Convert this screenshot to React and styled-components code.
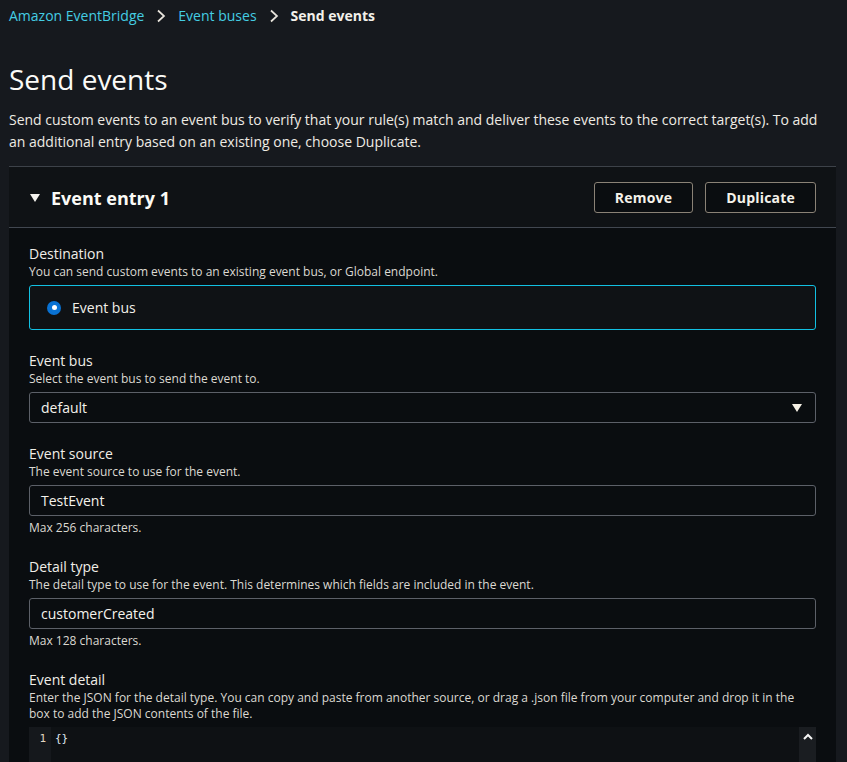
import React from "react";
import styled, { createGlobalStyle } from "styled-components";

const Global = createGlobalStyle`
  html, body { margin: 0; padding: 0; background: #16191e; }
  body { font-family: "Open Sans", "Noto Sans", sans-serif; color: #eceae6; }
  * { box-sizing: border-box; }
`;

const Page = styled.div`
  padding: 0 11px 0 9px;
`;

const Breadcrumbs = styled.nav`
  display: flex;
  align-items: center;
  gap: 12px;
  padding-top: 6px;
  font-size: 14px;
  line-height: 19px;
`;

const Crumb = styled.a`
  color: #44cde3;
  text-decoration: none;
`;

const Current = styled.span`
  color: #f2f0ea;
  font-weight: 700;
`;

const ChevronIcon = () => (
  <svg width="10" height="14" viewBox="0 0 10 14" aria-hidden="true">
    <path d="M2 1.5 L8 7 L2 12.5" fill="none" stroke="#e8e4dc" strokeWidth="1.7" />
  </svg>
);

const Title = styled.h1`
  margin: 36px 0 0;
  font-size: 28px;
  line-height: 36px;
  font-weight: 400;
  color: #fbfbf8;
`;

const Intro = styled.p`
  margin: 12px 0 0;
  font-size: 14px;
  line-height: 22px;
  color: #eeebe4;
`;

const Panel = styled.section`
  margin-top: 13px;
  background: #0a0d10;
  border-top: 1px solid #3d4249;
`;

const PanelHeader = styled.header`
  display: flex;
  align-items: center;
  justify-content: space-between;
  padding: 15px 20px 14px;
  background: #0f1215;
  border-bottom: 1px solid #414750;
`;

const HeaderTitle = styled.h2`
  display: flex;
  align-items: center;
  gap: 11px;
  margin: 0;
  font-size: 18px;
  line-height: 24px;
  font-weight: 700;
  color: #fbfaf6;
`;

const Caret = styled.span`
  display: inline-block;
  width: 0;
  height: 0;
  border-left: 5px solid transparent;
  border-right: 5px solid transparent;
  border-top: 8px solid #f4f2ee;
  margin-left: 1px;
`;

const Actions = styled.div`
  display: flex;
  gap: 12px;
`;

const Button = styled.button`
  height: 31px;
  padding: 0 20px;
  background: #0a0d10;
  border: 1px solid #8a8276;
  border-radius: 3px;
  color: #f5f2ea;
  font-family: inherit;
  font-size: 14px;
  font-weight: 700;
  letter-spacing: 0.2px;
`;

const PanelBody = styled.div`
  display: flex;
  flex-direction: column;
  gap: 21px;
  padding: 16px 20px 0;
`;

const Field = styled.div`
  display: flex;
  flex-direction: column;
`;

const Label = styled.label`
  font-size: 14px;
  line-height: 20px;
  color: #f0eee8;
`;

const Description = styled.div`
  font-size: 12px;
  line-height: 16px;
  color: #dcd9d2;
`;

const Control = styled.div`
  margin-top: ${(p) => p.$gap ?? 5}px;
`;

const Constraint = styled.div`
  margin-top: 4px;
  font-size: 12px;
  line-height: 16px;
  color: #dcd9d2;
`;

const RadioCard = styled.div`
  display: flex;
  align-items: center;
  gap: 11px;
  height: 45px;
  padding: 0 16px 0 17px;
  background: #0f1215;
  border: 1px solid #12c0e2;
  border-radius: 3px;
  font-size: 14px;
  color: #f2f0ea;
`;

const Radio = styled.span`
  position: relative;
  width: 14px;
  height: 14px;
  border-radius: 50%;
  background: #0972d3;
  flex: none;
  &::after {
    content: "";
    position: absolute;
    left: 4.5px;
    top: 4.5px;
    width: 5px;
    height: 5px;
    border-radius: 50%;
    background: #ffffff;
  }
`;

const InputBox = styled.div`
  display: flex;
  align-items: center;
  justify-content: space-between;
  height: 31px;
  padding: 0 13px 0 11px;
  background: #0a0d10;
  border: 1px solid #5c6068;
  border-radius: 3px;
  font-size: 14px;
  color: #f4f2ec;
`;

const SelectArrow = styled.span`
  width: 0;
  height: 0;
  border-left: 5.5px solid transparent;
  border-right: 5.5px solid transparent;
  border-top: 8px solid #f6f1e6;
`;

const Editor = styled.div`
  display: flex;
  height: 220px;
  background: #0e1114;
  font-family: "DejaVu Sans Mono", "Liberation Mono", monospace;
  font-size: 11px;
  line-height: 16px;
`;

const Gutter = styled.div`
  width: 22px;
  padding: 4px 5px 0 0;
  background: #15181c;
  text-align: right;
  color: #e2d6c2;
`;

const Code = styled.div`
  flex: 1;
  padding: 4px 0 0 4px;
  color: #dfe6ee;
`;

const Scrollbar = styled.div`
  width: 17px;
  background: #1a1d21;
  display: flex;
  justify-content: center;
  padding-top: 6px;
`;

const UpIcon = () => (
  <svg width="10" height="7" viewBox="0 0 10 7" aria-hidden="true">
    <path d="M1 6 L5 2 L9 6" fill="none" stroke="#f5f5f5" strokeWidth="2" />
  </svg>
);

export default function App() {
  return (
    <>
      <Global />
      <Page>
        <Breadcrumbs>
          <Crumb href="#">Amazon EventBridge</Crumb>
          <ChevronIcon />
          <Crumb href="#">Event buses</Crumb>
          <ChevronIcon />
          <Current>Send events</Current>
        </Breadcrumbs>
        <Title>Send events</Title>
        <Intro>
          Send custom events to an event bus to verify that your rule(s) match and deliver these events to the
          correct target(s). To add an additional entry based on an existing one, choose Duplicate.
        </Intro>
        <Panel>
          <PanelHeader>
            <HeaderTitle>
              <Caret />
              Event entry 1
            </HeaderTitle>
            <Actions>
              <Button>Remove</Button>
              <Button>Duplicate</Button>
            </Actions>
          </PanelHeader>
          <PanelBody>
            <Field>
              <Label>Destination</Label>
              <Description>You can send custom events to an existing event bus, or Global endpoint.</Description>
              <Control>
                <RadioCard>
                  <Radio />
                  Event bus
                </RadioCard>
              </Control>
            </Field>
            <Field>
              <Label>Event bus</Label>
              <Description>Select the event bus to send the event to.</Description>
              <Control>
                <InputBox>
                  default
                  <SelectArrow />
                </InputBox>
              </Control>
            </Field>
            <Field>
              <Label>Event source</Label>
              <Description>The event source to use for the event.</Description>
              <Control>
                <InputBox>TestEvent</InputBox>
              </Control>
              <Constraint>Max 256 characters.</Constraint>
            </Field>
            <Field>
              <Label>Detail type</Label>
              <Description>
                The detail type to use for the event. This determines which fields are included in the event.
              </Description>
              <Control>
                <InputBox>customerCreated</InputBox>
              </Control>
              <Constraint>Max 128 characters.</Constraint>
            </Field>
            <Field>
              <Label>Event detail</Label>
              <Description>
                Enter the JSON for the detail type. You can copy and paste from another source, or drag a .json file
                from your computer and drop it in the box to add the JSON contents of the file.
              </Description>
              <Control $gap={5}>
                <Editor>
                  <Gutter>1</Gutter>
                  <Code>{"{}"}</Code>
                  <Scrollbar>
                    <UpIcon />
                  </Scrollbar>
                </Editor>
              </Control>
            </Field>
          </PanelBody>
        </Panel>
      </Page>
    </>
  );
}
